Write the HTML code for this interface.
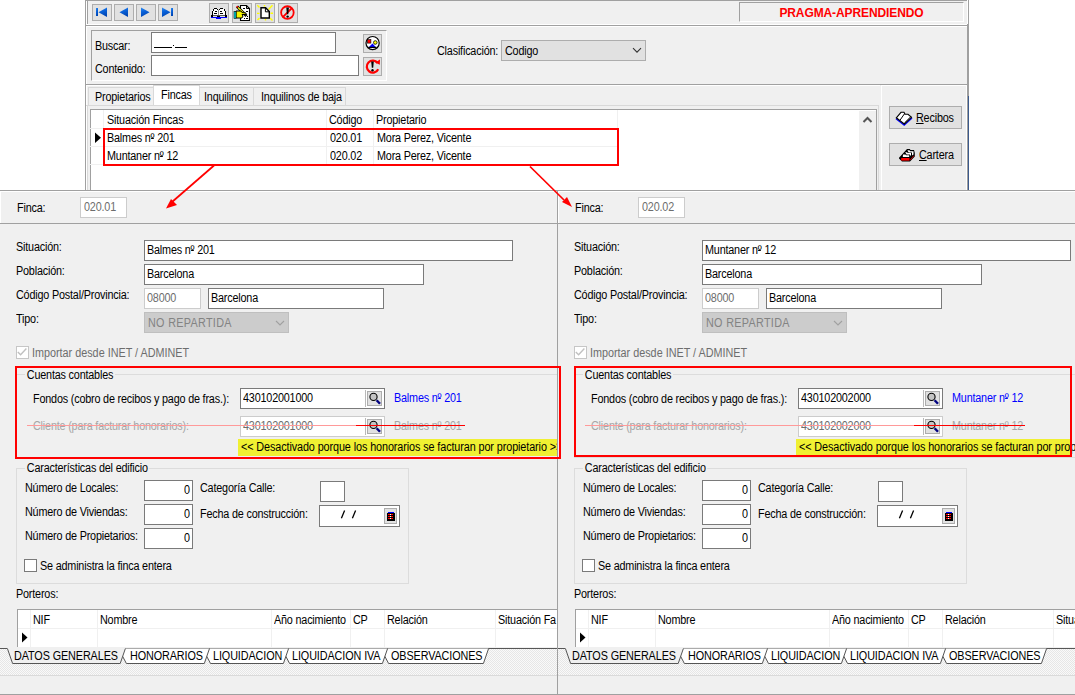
<!DOCTYPE html><html><head><meta charset='utf-8'><style>
*{margin:0;padding:0;box-sizing:border-box}
html,body{width:1075px;height:695px;overflow:hidden;background:#fff}
body{position:relative;font-family:"Liberation Sans",sans-serif;font-size:11px;color:#000}
.a{position:absolute}
.t{position:absolute;white-space:nowrap;line-height:13px;font-size:12px;letter-spacing:-0.2px;transform:scaleX(0.9);transform-origin:0 0}
.g{color:#6d6d6d}
.in{background:#fff;border:1px solid #7a7a7a}
.dis{background:#fff;border:1px solid #cccccc}
.btn{background:#e1e1e1;border:1px solid #adadad}
.sunk{border-top:1px solid #a0a0a0;border-left:1px solid #a0a0a0;border-right:1px solid #fff;border-bottom:1px solid #fff}
.clip{position:absolute;overflow:hidden}
</style></head><body>
<div class="a" style="left:85px;top:0px;width:884px;height:190px;background:#f0f0f0"></div>
<div class="a" style="left:85px;top:0px;width:1px;height:190px;background:#a0a0a0"></div>
<div class="a" style="left:86px;top:0px;width:1px;height:190px;background:#fff"></div>
<div class="a" style="left:85px;top:0px;width:882px;height:1px;background:#a0a0a0"></div>
<div class="a" style="left:967px;top:0px;width:2px;height:190px;background:#a0a0a0"></div>
<div class="a" style="left:967px;top:0px;width:1px;height:24px;background:#fff"></div>
<div class="a" style="left:968px;top:96px;width:1px;height:94px;background:#3c5a8c"></div>
<div class="a" style="left:966px;top:85px;width:1px;height:105px;background:#fff"></div>
<div class="a" style="left:87px;top:1px;width:1px;height:23px;background:#a0a0a0"></div>
<div class="a" style="left:87px;top:24px;width:880px;height:1px;background:#fff"></div>
<div class="a" style="left:85px;top:25px;width:883px;height:1px;background:#a0a0a0"></div>
<div class="a" style="left:86px;top:26px;width:881px;height:1px;background:#fff"></div>
<div class="a btn" style="left:92px;top:4px;width:20px;height:17px"></div>
<div class="a btn" style="left:114px;top:4px;width:20px;height:17px"></div>
<div class="a btn" style="left:136px;top:4px;width:20px;height:17px"></div>
<div class="a btn" style="left:158px;top:4px;width:20px;height:17px"></div>
<svg width="0" height="0" style="position:absolute"><defs><linearGradient id="bl" x1="0" y1="0" x2="0.3" y2="1"><stop offset="0" stop-color="#2f8cf0"/><stop offset="0.45" stop-color="#0a64dc"/><stop offset="1" stop-color="#0046b4"/></linearGradient></defs></svg><svg class="a" style="left:92px;top:4px" width="20" height="17"><rect x="4" y="4" width="2" height="8" fill="url(#bl)"/><path d="M6.5 8.2 L15 3.5 L15 13 Z" fill="url(#bl)"/></svg>
<svg class="a" style="left:114px;top:4px" width="20" height="17"><path d="M5.5 8.2 L14 3.5 L14 13 Z" fill="url(#bl)"/></svg>
<svg class="a" style="left:136px;top:4px" width="20" height="17"><path d="M5 3.5 L13.5 8.2 L5 13 Z" fill="url(#bl)"/></svg>
<svg class="a" style="left:158px;top:4px" width="20" height="17"><path d="M4 3.5 L12.5 8.2 L4 13 Z" fill="url(#bl)"/><rect x="13" y="4" width="2" height="8" fill="url(#bl)"/></svg>
<div class="a btn" style="left:209px;top:3px;width:20px;height:20px"></div>
<div class="a btn" style="left:232px;top:3px;width:20px;height:20px"></div>
<div class="a btn" style="left:255px;top:3px;width:20px;height:20px"></div>
<div class="a btn" style="left:278px;top:3px;width:20px;height:20px"></div>
<svg class="a" style="left:209px;top:3px" width="20" height="20" shape-rendering="crispEdges">
<path d="M4,6 L8,6 L9,7 L10,6 L15,6 L16,8 L16,12 L3,12 L3,8 Z" fill="#fff"/>
<rect x="5" y="5" width="3" height="1" fill="#000"/><rect x="11" y="5" width="3" height="1" fill="#000"/>
<rect x="4" y="6" width="1" height="2" fill="#000"/><rect x="15" y="6" width="1" height="2" fill="#000"/>
<rect x="3" y="8" width="1" height="4" fill="#000"/><rect x="16" y="8" width="1" height="4" fill="#000"/>
<rect x="2" y="12" width="2" height="2" fill="#000"/><rect x="16" y="12" width="2" height="2" fill="#000"/>
<rect x="8" y="6" width="1" height="1" fill="#000"/><rect x="10" y="6" width="1" height="1" fill="#000"/>
<rect x="9" y="7" width="1" height="6" fill="#8a8a8a"/>
<rect x="6" y="8" width="2" height="1" fill="#000"/><rect x="5" y="10" width="3" height="1" fill="#000"/>
<rect x="11" y="8" width="2" height="1" fill="#000"/><rect x="11" y="10" width="3" height="1" fill="#000"/>
<rect x="4" y="12" width="12" height="1" fill="#555"/><rect x="8" y="13" width="3" height="1" fill="#000"/>
<rect x="2" y="14" width="16" height="1" fill="#0000ff"/><rect x="7" y="15" width="5" height="1" fill="#0000ff"/>
</svg>
<svg class="a" style="left:232px;top:3px" width="20" height="20">
<path d="M8.5,2.5 L14.5,2.5 L17.5,5.5 L17.5,17.5 L8.5,17.5 Z" fill="#fff" stroke="#000" stroke-width="1.1"/>
<path d="M14.5,2.5 L14.5,5.5 L17.5,5.5" fill="none" stroke="#000" stroke-width="1"/>
<g shape-rendering="crispEdges" fill="#000"><rect x="11" y="5" width="2" height="1"/><rect x="14" y="8" width="2" height="1"/><rect x="15" y="13" width="1" height="1"/><rect x="12" y="15" width="1" height="1"/><rect x="14" y="15" width="2" height="1"/></g>
<path d="M5,3.5 L14.5,13" stroke="#000" stroke-width="2.8"/>
<path d="M6,4.5 L13.5,12" stroke="#ffff00" stroke-width="1.1"/>
<rect x="4.5" y="3" width="1.5" height="1.5" fill="#ff0000"/>
<path d="M4,8 L9,8 L10,9.5 L14,10 L14,11.5 L10,11.5 L11,13 L10,15 L4,15 Z" fill="#f4f400" stroke="#000" stroke-width="1"/>
<rect x="2" y="8.5" width="2" height="7" fill="#00e6f0" stroke="#000" stroke-width="0.6"/>
</svg>
<svg class="a" style="left:255px;top:3px" width="20" height="20">
<path d="M2.3,2.3 L4.5,4.5 M9.5,2 L9.5,3.5 M17.5,2.3 L13.5,6.5 M2,10.4 L4.5,10.4 M18,10.2 L15.5,10.2 M2.5,17 L4.5,15 M10.5,17.5 L10.5,16 M17.5,17.5 L15,15" stroke="#ffff00" stroke-width="1.4"/>
<path d="M6,4.8 L10.6,4.8 L14.3,8.6 L14.3,15 L6,15 Z" fill="#fff" stroke="#000" stroke-width="1.4"/>
<path d="M10.4,4.8 L10.4,8.8 L14.3,8.8" fill="none" stroke="#000" stroke-width="1"/>
</svg>
<svg class="a" style="left:278px;top:3px" width="20" height="20">
<circle cx="9.4" cy="9.55" r="6.3" fill="none" stroke="#ff0000" stroke-width="1.8"/>
<path d="M4.8,14.2 L14,5" stroke="#ff0000" stroke-width="1.8"/>
<path d="M8.3,4.4 L10.9,4.4 L10.3,11.3 L8.9,11.3 Z" fill="#000"/><circle cx="9.6" cy="13.6" r="1.2" fill="#000"/>
</svg>
<div class="a sunk" style="left:739px;top:2px;width:225px;height:20px"></div>
<div class="t" style="left:739px;width:225px;text-align:center;top:6px;font:bold 12px 'Liberation Sans',sans-serif;letter-spacing:-0.1px;color:#ff0000;line-height:14px;transform:none">PRAGMA-APRENDIENDO</div>
<div class="a sunk" style="left:91px;top:30px;width:296px;height:51px"></div>
<div class="t " style="left:95px;top:40px;">Buscar:</div>
<div class="a in" style="left:151px;top:32px;width:185px;height:21px"><div class="a" style="left:2px;top:14px;width:18px;height:1px;background:#000"></div><div class="a" style="left:21px;top:12px;width:1px;height:1px;background:#000"></div><div class="a" style="left:23px;top:14px;width:12px;height:1px;background:#000"></div></div>
<div class="t " style="left:95px;top:63px;">Contenido:</div>
<div class="a in" style="left:151px;top:55px;width:208px;height:21px"></div>
<div class="a btn" style="left:363px;top:34px;width:19px;height:19px"></div>
<div class="a btn" style="left:363px;top:57px;width:19px;height:19px"></div>
<svg class="a" style="left:363px;top:34px" width="19" height="19">
<circle cx="9.6" cy="9.1" r="6.6" fill="#fff" stroke="#000" stroke-width="1.2"/>
<rect x="4.4" y="5.6" width="3.5" height="3.5" fill="#f00" stroke="#000" stroke-width="0.6"/>
<circle cx="12.3" cy="8.5" r="1.8" fill="#ff0" stroke="#000" stroke-width="0.8"/>
<path d="M9.4,9.6 L12.8,13 L6,13Z" fill="#00f"/><path d="M5.2,13.4 L13.6,13.4" stroke="#000" stroke-width="1.2"/>
</svg>
<svg class="a" style="left:363px;top:57px" width="19" height="19">
<path d="M14.6,6 A6 6 0 1 0 15.2,12.2" fill="none" stroke="#f00" stroke-width="2.2"/>
<path d="M12.2,5.6 L17,2.6 L16.8,7.8Z" fill="#f00"/>
<path d="M8.2,4.5 L10.8,4.5 L10.2,10.8 L8.8,10.8Z" fill="#000"/><circle cx="9.5" cy="13.3" r="1.2" fill="#000"/>
</svg>
<div class="t " style="left:437px;top:45px;">Clasificación:</div>
<div class="a btn" style="left:501px;top:40px;width:145px;height:21px"></div>
<div class="t " style="left:505px;top:45px;">Codigo</div>
<svg class="a" style="left:631px;top:46px" width="12" height="10"><path d="M2 2.2 L6 6.2 L10 2.2" fill="none" stroke="#333" stroke-width="1.1"/></svg>
<div class="a" style="left:85px;top:84px;width:883px;height:1px;background:#a0a0a0"></div>
<div class="a" style="left:86px;top:85px;width:881px;height:1px;background:#fff"></div>
<div class="a" style="left:86px;top:105px;width:792px;height:1px;background:#d9d9d9"></div>
<div class="a"  style="left:88px;top:87px;width:66px;height:19px;background:#f0f0f0;border:1px solid #d9d9d9;border-bottom:none"></div>
<div class="t " style="left:95px;top:91px;">Propietarios</div>
<div class="a"  style="left:199px;top:87px;width:55px;height:19px;background:#f0f0f0;border:1px solid #d9d9d9;border-bottom:none"></div>
<div class="t " style="left:204px;top:91px;">Inquilinos</div>
<div class="a"  style="left:253px;top:87px;width:93px;height:19px;background:#f0f0f0;border:1px solid #d9d9d9;border-bottom:none"></div>
<div class="t " style="left:261px;top:91px;">Inquilinos de baja</div>
<div class="a " style="left:153px;top:85px;width:47px;height:22px;background:#fff;border:1px solid #d9d9d9;border-bottom:none"></div>
<div class="t " style="left:161px;top:89px;">Fincas</div>
<div class="a" style="left:87px;top:105px;width:792px;height:85px;background:#f0f0f0;border-left:1px solid #d9d9d9;border-right:1px solid #d9d9d9;border-top:1px solid #d9d9d9"></div>
<div class="a" style="left:90px;top:109px;width:787px;height:81px;background:#fff;border-left:1px solid #a0a0a0;border-right:1px solid #a0a0a0;border-top:1px solid #a0a0a0"></div>
<div class="a" style="left:859px;top:111px;width:17px;height:79px;background:#f0f0f0"></div>
<svg class="a" style="left:861px;top:114px" width="12" height="10" shape-rendering="crispEdges"><path d="M2.5 8 L6.5 4 L10.5 8" fill="none" stroke="#555" stroke-width="2" shape-rendering="auto"/></svg>
<div class="a" style="left:90px;top:128px;width:527px;height:1px;background:#f0f0f0"></div>
<div class="a" style="left:90px;top:146px;width:527px;height:1px;background:#f0f0f0"></div>
<div class="a" style="left:90px;top:164px;width:527px;height:1px;background:#f0f0f0"></div>
<div class="a" style="left:103px;top:110px;width:1px;height:54px;background:#f0f0f0"></div>
<div class="a" style="left:326px;top:110px;width:1px;height:54px;background:#f0f0f0"></div>
<div class="a" style="left:373px;top:110px;width:1px;height:54px;background:#f0f0f0"></div>
<div class="a" style="left:617px;top:110px;width:1px;height:54px;background:#f0f0f0"></div>
<div class="t " style="left:107px;top:114px;">Situación Fincas</div>
<div class="t " style="left:329px;top:114px;">Código</div>
<div class="t " style="left:376px;top:114px;">Propietario</div>
<div class="t " style="left:107px;top:132px;">Balmes n<span style="display:inline-block;position:relative">º<i style="position:absolute;left:0.5px;right:1px;top:6px;height:1px;background:currentColor"></i></span> 201</div>
<div class="t " style="left:330px;top:132px;">020.01</div>
<div class="t " style="left:377px;top:132px;">Mora Perez, Vicente</div>
<div class="t " style="left:107px;top:150px;">Muntaner n<span style="display:inline-block;position:relative">º<i style="position:absolute;left:0.5px;right:1px;top:6px;height:1px;background:currentColor"></i></span> 12</div>
<div class="t " style="left:330px;top:150px;">020.02</div>
<div class="t " style="left:377px;top:150px;">Mora Perez, Vicente</div>
<svg class="a" style="left:94px;top:132px" width="8" height="12"><path d="M1 0.5 L7 5.75 L1 11Z" fill="#000"/></svg>
<div class="a" style="left:880px;top:85px;width:1px;height:105px;background:#f0f0f0"></div>
<div class="a" style="left:881px;top:86px;width:1px;height:104px;background:#fff"></div>
<div class="a btn" style="left:889px;top:106px;width:73px;height:23px"></div>
<div class="a btn" style="left:889px;top:143px;width:73px;height:23px"></div>
<div class="t " style="left:916px;top:112px;"><u>R</u>ecibos</div>
<div class="t " style="left:919px;top:149px;"><u>C</u>artera</div>
<svg class="a" style="left:894px;top:108px" width="20" height="18">
<path d="M2,10.8 L10.2,17 L18,10" stroke="#0000ff" stroke-width="1.4" fill="none"/>
<path d="M2.3,9.8 L7,4.3 L10,4.3 L11,6.3 L14,6.3 L17.5,9.3 L10.3,16 Z" fill="#fff" stroke="#000" stroke-width="1.1"/>
<path d="M10.6,5.6 L6,12.2" stroke="#000" stroke-width="1"/>
<path d="M10.8,14.6 L16.6,8.8" stroke="#000" stroke-width="0.9"/>
</svg>
<svg class="a" style="left:897px;top:145px" width="20" height="18">
<path d="M2,12.8 L10,4 L12.8,4 L13.5,5 L17,5 L17.8,8 L17.8,11.5 L13,16.5 L5,16.5 L2,13.5 Z" fill="#000"/>
<path d="M6,9.5 L8.5,9.5 L9.2,10.3 L12.2,10.3 L12.2,12 L5.8,12 Z" fill="#fff"/>
<path d="M8.2,7.2 L10,7.2 L10.8,8 L14,8 L14,10.5 L13,10.5 L13,9.4 L9.6,9.4 Z" fill="#fff"/>
<path d="M10.4,5.2 L12.4,5.2 L13.2,6.2 L16.5,6.2 L16.5,9.6 L15,10.6 L15,7.4 L11.6,7.4 Z" fill="#fff"/>
<rect x="4.2" y="13" width="8.3" height="2.6" fill="#ff0000"/>
<path d="M13.3,15 L16.8,10.8" stroke="#c00000" stroke-width="1"/>
</svg>
<div class="a" style="left:103px;top:128px;width:516px;height:38px;border:2px solid #ff0000"></div>
<div class="clip" style="left:0px;top:190px;width:557px;height:505px;background:#f0f0f0">
<div class="a" style="left:0px;top:0px;width:557px;height:1px;background:#a0a0a0"></div>
<div class="a" style="left:0px;top:1px;width:1px;height:32px;background:#fff"></div>
<div class="a" style="left:0px;top:1px;width:557px;height:1px;background:#fff"></div>
<div class="t " style="left:17px;top:12px;">Finca:</div>
<div class="a dis" style="left:80px;top:7px;width:47px;height:21px"></div>
<div class="t g" style="left:84px;top:11px;">020.01</div>
<div class="a" style="left:0px;top:33px;width:557px;height:1px;background:#a0a0a0"></div>
<div class="t " style="left:16px;top:51px;">Situación:</div>
<div class="a in" style="left:144px;top:50px;width:369px;height:21px"></div>
<div class="t " style="left:147px;top:54px;">Balmes n<span style="display:inline-block;position:relative">º<i style="position:absolute;left:0.5px;right:1px;top:6px;height:1px;background:currentColor"></i></span> 201</div>
<div class="t " style="left:16px;top:75px;">Población:</div>
<div class="a in" style="left:144px;top:74px;width:280px;height:21px"></div>
<div class="t " style="left:147px;top:78px;">Barcelona</div>
<div class="t " style="left:16px;top:99px;">Código Postal/Provincia:</div>
<div class="a dis" style="left:144px;top:98px;width:57px;height:21px"></div>
<div class="t g" style="left:147px;top:102px;">08000</div>
<div class="a in" style="left:208px;top:98px;width:176px;height:21px"></div>
<div class="t " style="left:211px;top:102px;">Barcelona</div>
<div class="t " style="left:16px;top:123px;">Tipo:</div>
<div class="a " style="left:144px;top:122px;width:145px;height:21px;background:#cccccc;border:1px solid #bfbfbf"></div>
<div class="t " style="left:148px;top:127px;color:#838383;letter-spacing:0.35px">NO REPARTIDA</div>
<svg class="a" style="left:274px;top:128px" width="12" height="10"><path d="M2 3 L6 7 L10 3" fill="none" stroke="#a0a0a0" stroke-width="1.1"/></svg>
<div class="a " style="left:16px;top:156px;width:13px;height:13px;border:1px solid #c6c6c6;background:#fff"></div>
<svg class="a" style="left:16px;top:156px" width="13" height="13"><path d="M1.8,6 L4.6,8.8 L10.4,2.6" fill="none" stroke="#c0c0c0" stroke-width="1.4"/></svg>
<div class="t " style="left:32px;top:157px;color:#6d6d6d;letter-spacing:0px">Importar desde INET / ADMINET</div>
<div class="a " style="left:16px;top:184px;width:542px;height:84px;border:1px solid #dcdcdc"></div>
<div class="t" style="left:25px;top:179px;background:#f0f0f0;padding:0 2px">Cuentas contables</div>
<div class="t " style="left:33px;top:203px;">Fondos (cobro de recibos y pago de fras.):</div>
<div class="a in" style="left:240px;top:198px;width:145px;height:21px"></div>
<div class="t " style="left:243px;top:202px;">430102001000</div>
<div class="a btn" style="left:367px;top:201px;width:15px;height:15px"></div>
<div class="a" style="left:365px;top:200px;width:1px;height:17px;background:#b9b9b9"></div>
<svg class="a" style="left:367px;top:201px" width="16" height="16"><circle cx="6.5" cy="5.9" r="3.6" fill="#c4c4c4" stroke="#000" stroke-width="1.1"/><path d="M9.6,9.2 L13,12.8" stroke="#000080" stroke-width="2.4"/></svg>
<div class="t " style="left:394px;top:202px;color:#0000ff">Balmes n<span style="display:inline-block;position:relative">º<i style="position:absolute;left:0.5px;right:1px;top:6px;height:1px;background:currentColor"></i></span> 201</div>
<div class="t " style="left:33px;top:230px;color:#a6a6a6">Cliente (para facturar honorarios):</div>
<div class="a dis" style="left:240px;top:226px;width:145px;height:21px"></div>
<div class="t g" style="left:243px;top:230px;">430102001000</div>
<div class="a btn" style="left:367px;top:229px;width:15px;height:15px"></div>
<div class="a" style="left:365px;top:228px;width:1px;height:17px;background:#b9b9b9"></div>
<svg class="a" style="left:367px;top:229px" width="16" height="16"><circle cx="6.5" cy="5.9" r="3.6" fill="#c4c4c4" stroke="#000" stroke-width="1.1"/><path d="M9.6,9.2 L13,12.8" stroke="#000080" stroke-width="2.4"/></svg>
<div class="t " style="left:394px;top:230px;color:#a6a6a6">Balmes n<span style="display:inline-block;position:relative">º<i style="position:absolute;left:0.5px;right:1px;top:6px;height:1px;background:currentColor"></i></span> 201</div>
<div class="a" style="left:27px;top:235px;width:329px;height:1px;background:#ff9a9a"></div>
<div class="a" style="left:356px;top:235px;width:109px;height:1px;background:#ff0000"></div>
<div class="a" style="left:238px;top:249px;width:330px;height:17px;background:#f0f032"></div>
<div class="t " style="left:241px;top:251px;letter-spacing:-0.1px">&lt;&lt; Desactivado porque los honorarios se facturan por propietario &gt;&gt;</div>
<div class="a " style="left:16px;top:278px;width:393px;height:116px;border:1px solid #dcdcdc"></div>
<div class="t" style="left:25px;top:272px;background:#f0f0f0;padding:0 2px">Características del edificio</div>
<div class="t " style="left:25px;top:292px;">Número de Locales:</div>
<div class="a in" style="left:144px;top:290px;width:49px;height:21px"></div>
<div class="t " style="left:184px;top:294px;">0</div>
<div class="t " style="left:25px;top:316px;">Número de Viviendas:</div>
<div class="a in" style="left:144px;top:314px;width:49px;height:21px"></div>
<div class="t " style="left:184px;top:318px;">0</div>
<div class="t " style="left:25px;top:340px;">Número de Propietarios:</div>
<div class="a in" style="left:144px;top:338px;width:49px;height:21px"></div>
<div class="t " style="left:184px;top:342px;">0</div>
<div class="t " style="left:200px;top:292px;">Categoría Calle:</div>
<div class="a in" style="left:320px;top:291px;width:25px;height:21px"></div>
<div class="t " style="left:200px;top:318px;">Fecha de construcción:</div>
<div class="a in" style="left:319px;top:315px;width:81px;height:22px"></div>
<svg class="a" style="left:340px;top:319px" width="18" height="11"><path d="M4.6,1.5 L1.4,9.3 M15.6,1.5 L12.4,9.3" stroke="#000" stroke-width="1.3"/></svg>
<div class="a btn" style="left:384px;top:318px;width:13px;height:16px"></div>
<svg class="a" style="left:384px;top:318px" width="13" height="16" shape-rendering="crispEdges"><rect x="3" y="5" width="8" height="8" rx="1" fill="#000"/><rect x="4" y="4" width="6" height="1" fill="#0000ff"/><g fill="#ff0000"><rect x="4" y="6" width="2" height="1"/><rect x="7" y="6" width="2" height="1"/><rect x="4" y="8" width="2" height="1"/><rect x="7" y="8" width="2" height="1"/><rect x="4" y="10" width="2" height="1"/><rect x="7" y="10" width="2" height="1"/></g><g fill="#fff"><rect x="6" y="6" width="1" height="1"/><rect x="6" y="8" width="1" height="1"/><rect x="6" y="10" width="1" height="1"/></g></svg>
<div class="a in" style="left:24px;top:369px;width:13px;height:13px"></div>
<div class="t " style="left:40px;top:370px;">Se administra la finca entera</div>
<div class="t " style="left:16px;top:398px;">Porteros:</div>
<div class="a" style="left:17px;top:419px;width:540px;height:38px;background:#fff;border-top:1px solid #a0a0a0;border-left:1px solid #a0a0a0"></div>
<div class="a" style="left:18px;top:438px;width:539px;height:1px;background:#f0f0f0"></div>
<div class="a" style="left:30px;top:420px;width:1px;height:37px;background:#f0f0f0"></div>
<div class="a" style="left:97px;top:420px;width:1px;height:37px;background:#f0f0f0"></div>
<div class="a" style="left:271px;top:420px;width:1px;height:37px;background:#f0f0f0"></div>
<div class="a" style="left:350px;top:420px;width:1px;height:37px;background:#f0f0f0"></div>
<div class="a" style="left:384px;top:420px;width:1px;height:37px;background:#f0f0f0"></div>
<div class="a" style="left:495px;top:420px;width:1px;height:37px;background:#f0f0f0"></div>
<div class="t " style="left:33px;top:424px;">NIF</div>
<div class="t " style="left:100px;top:424px;">Nombre</div>
<div class="t " style="left:274px;top:424px;">Año nacimiento</div>
<div class="t " style="left:353px;top:424px;">CP</div>
<div class="t " style="left:387px;top:424px;">Relación</div>
<div class="t " style="left:498px;top:424px;">Situación Fa</div>
<svg class="a" style="left:21px;top:442px" width="8" height="12"><path d="M1 0.5 L6.5 5.5 L1 10.5Z" fill="#000"/></svg>
<div class="a" style="left:0px;top:458px;width:557px;height:27px;background:repeating-conic-gradient(#f9f9f9 0% 25%, #e6e6e6 0% 50%) 0 0/2px 2px"></div>
<div class="a" style="left:0px;top:485px;width:557px;height:1px;background:#dadada"></div>
<div class="a" style="left:0px;top:504px;width:557px;height:1px;background:#a0a0a0"></div>
<svg class="a" style="left:0;top:457px" width="557" height="18"><path d="M0,1.5 L7.4,1.5 M125.4,1.5 L557,1.5" stroke="#575757" stroke-width="1"/><path d="M387.6,1.5 L488.6,1.5 L483.40000000000003,16.5 L388.6,16.5 L384.76000000000005,9.2 Z" fill="#fff"/><path d="M384.76000000000005,9.2 L388.6,16.5 L483.40000000000003,16.5 L488.6,1.5" fill="none" stroke="#555" stroke-width="1"/><path d="M288.6,1.5 L387.6,1.5 L382.40000000000003,16.5 L289.6,16.5 L285.76000000000005,9.2 Z" fill="#fff"/><path d="M285.76000000000005,9.2 L289.6,16.5 L382.40000000000003,16.5 L387.6,1.5" fill="none" stroke="#555" stroke-width="1"/><path d="M209.5,1.5 L288.6,1.5 L283.40000000000003,16.5 L210.5,16.5 L206.66,9.2 Z" fill="#fff"/><path d="M206.66,9.2 L210.5,16.5 L283.40000000000003,16.5 L288.6,1.5" fill="none" stroke="#555" stroke-width="1"/><path d="M125.4,1.5 L209.5,1.5 L204.3,16.5 L126.4,16.5 L122.56,9.2 Z" fill="#fff"/><path d="M122.56,9.2 L126.4,16.5 L204.3,16.5 L209.5,1.5" fill="none" stroke="#555" stroke-width="1"/><path d="M7.4,1 L125.4,1 L120.2,16.5 L12.6,16.5 Z" fill="#f0f0f0"/><path d="M7.4,1.5 L12.6,16.5 L120.2,16.5 L125.4,1.5" fill="none" stroke="#555" stroke-width="1"/></svg>
<div class="t " style="left:14px;top:460px;letter-spacing:-0.1px">DATOS GENERALES</div>
<div class="t " style="left:130px;top:460px;letter-spacing:-0.1px">HONORARIOS</div>
<div class="t " style="left:213px;top:460px;letter-spacing:-0.1px">LIQUIDACION</div>
<div class="t " style="left:292px;top:460px;letter-spacing:-0.1px">LIQUIDACION IVA</div>
<div class="t " style="left:391px;top:460px;letter-spacing:-0.1px">OBSERVACIONES</div>
</div>
<div class="a" style="left:557px;top:190px;width:1px;height:505px;background:#a0a0a0"></div>
<div class="clip" style="left:558px;top:190px;width:517px;height:505px;background:#f0f0f0">
<div class="a" style="left:0px;top:0px;width:517px;height:1px;background:#a0a0a0"></div>
<div class="a" style="left:0px;top:1px;width:1px;height:32px;background:#fff"></div>
<div class="a" style="left:0px;top:1px;width:517px;height:1px;background:#fff"></div>
<div class="t " style="left:17px;top:12px;">Finca:</div>
<div class="a dis" style="left:80px;top:7px;width:47px;height:21px"></div>
<div class="t g" style="left:84px;top:11px;">020.02</div>
<div class="a" style="left:0px;top:33px;width:517px;height:1px;background:#a0a0a0"></div>
<div class="t " style="left:16px;top:51px;">Situación:</div>
<div class="a in" style="left:144px;top:50px;width:369px;height:21px"></div>
<div class="t " style="left:147px;top:54px;">Muntaner n<span style="display:inline-block;position:relative">º<i style="position:absolute;left:0.5px;right:1px;top:6px;height:1px;background:currentColor"></i></span> 12</div>
<div class="t " style="left:16px;top:75px;">Población:</div>
<div class="a in" style="left:144px;top:74px;width:280px;height:21px"></div>
<div class="t " style="left:147px;top:78px;">Barcelona</div>
<div class="t " style="left:16px;top:99px;">Código Postal/Provincia:</div>
<div class="a dis" style="left:144px;top:98px;width:57px;height:21px"></div>
<div class="t g" style="left:147px;top:102px;">08000</div>
<div class="a in" style="left:208px;top:98px;width:176px;height:21px"></div>
<div class="t " style="left:211px;top:102px;">Barcelona</div>
<div class="t " style="left:16px;top:123px;">Tipo:</div>
<div class="a " style="left:144px;top:122px;width:145px;height:21px;background:#cccccc;border:1px solid #bfbfbf"></div>
<div class="t " style="left:148px;top:127px;color:#838383;letter-spacing:0.35px">NO REPARTIDA</div>
<svg class="a" style="left:274px;top:128px" width="12" height="10"><path d="M2 3 L6 7 L10 3" fill="none" stroke="#a0a0a0" stroke-width="1.1"/></svg>
<div class="a " style="left:16px;top:156px;width:13px;height:13px;border:1px solid #c6c6c6;background:#fff"></div>
<svg class="a" style="left:16px;top:156px" width="13" height="13"><path d="M1.8,6 L4.6,8.8 L10.4,2.6" fill="none" stroke="#c0c0c0" stroke-width="1.4"/></svg>
<div class="t " style="left:32px;top:157px;color:#6d6d6d;letter-spacing:0px">Importar desde INET / ADMINET</div>
<div class="a " style="left:16px;top:184px;width:542px;height:84px;border:1px solid #dcdcdc"></div>
<div class="t" style="left:25px;top:179px;background:#f0f0f0;padding:0 2px">Cuentas contables</div>
<div class="t " style="left:33px;top:203px;">Fondos (cobro de recibos y pago de fras.):</div>
<div class="a in" style="left:240px;top:198px;width:145px;height:21px"></div>
<div class="t " style="left:243px;top:202px;">430102002000</div>
<div class="a btn" style="left:367px;top:201px;width:15px;height:15px"></div>
<div class="a" style="left:365px;top:200px;width:1px;height:17px;background:#b9b9b9"></div>
<svg class="a" style="left:367px;top:201px" width="16" height="16"><circle cx="6.5" cy="5.9" r="3.6" fill="#c4c4c4" stroke="#000" stroke-width="1.1"/><path d="M9.6,9.2 L13,12.8" stroke="#000080" stroke-width="2.4"/></svg>
<div class="t " style="left:394px;top:202px;color:#0000ff">Muntaner n<span style="display:inline-block;position:relative">º<i style="position:absolute;left:0.5px;right:1px;top:6px;height:1px;background:currentColor"></i></span> 12</div>
<div class="t " style="left:33px;top:230px;color:#a6a6a6">Cliente (para facturar honorarios):</div>
<div class="a dis" style="left:240px;top:226px;width:145px;height:21px"></div>
<div class="t g" style="left:243px;top:230px;">430102002000</div>
<div class="a btn" style="left:367px;top:229px;width:15px;height:15px"></div>
<div class="a" style="left:365px;top:228px;width:1px;height:17px;background:#b9b9b9"></div>
<svg class="a" style="left:367px;top:229px" width="16" height="16"><circle cx="6.5" cy="5.9" r="3.6" fill="#c4c4c4" stroke="#000" stroke-width="1.1"/><path d="M9.6,9.2 L13,12.8" stroke="#000080" stroke-width="2.4"/></svg>
<div class="t " style="left:394px;top:230px;color:#a6a6a6">Muntaner n<span style="display:inline-block;position:relative">º<i style="position:absolute;left:0.5px;right:1px;top:6px;height:1px;background:currentColor"></i></span> 12</div>
<div class="a" style="left:27px;top:235px;width:329px;height:1px;background:#ff9a9a"></div>
<div class="a" style="left:356px;top:235px;width:111px;height:1px;background:#ff0000"></div>
<div class="a" style="left:238px;top:249px;width:274px;height:17px;background:#f0f032"></div>
<div class="t " style="left:241px;top:251px;letter-spacing:-0.1px">&lt;&lt; Desactivado porque los honorarios se facturan por propietario &gt;&gt;</div>
<div class="a " style="left:16px;top:278px;width:393px;height:116px;border:1px solid #dcdcdc"></div>
<div class="t" style="left:25px;top:272px;background:#f0f0f0;padding:0 2px">Características del edificio</div>
<div class="t " style="left:25px;top:292px;">Número de Locales:</div>
<div class="a in" style="left:144px;top:290px;width:49px;height:21px"></div>
<div class="t " style="left:184px;top:294px;">0</div>
<div class="t " style="left:25px;top:316px;">Número de Viviendas:</div>
<div class="a in" style="left:144px;top:314px;width:49px;height:21px"></div>
<div class="t " style="left:184px;top:318px;">0</div>
<div class="t " style="left:25px;top:340px;">Número de Propietarios:</div>
<div class="a in" style="left:144px;top:338px;width:49px;height:21px"></div>
<div class="t " style="left:184px;top:342px;">0</div>
<div class="t " style="left:200px;top:292px;">Categoría Calle:</div>
<div class="a in" style="left:320px;top:291px;width:25px;height:21px"></div>
<div class="t " style="left:200px;top:318px;">Fecha de construcción:</div>
<div class="a in" style="left:319px;top:315px;width:81px;height:22px"></div>
<svg class="a" style="left:340px;top:319px" width="18" height="11"><path d="M4.6,1.5 L1.4,9.3 M15.6,1.5 L12.4,9.3" stroke="#000" stroke-width="1.3"/></svg>
<div class="a btn" style="left:384px;top:318px;width:13px;height:16px"></div>
<svg class="a" style="left:384px;top:318px" width="13" height="16" shape-rendering="crispEdges"><rect x="3" y="5" width="8" height="8" rx="1" fill="#000"/><rect x="4" y="4" width="6" height="1" fill="#0000ff"/><g fill="#ff0000"><rect x="4" y="6" width="2" height="1"/><rect x="7" y="6" width="2" height="1"/><rect x="4" y="8" width="2" height="1"/><rect x="7" y="8" width="2" height="1"/><rect x="4" y="10" width="2" height="1"/><rect x="7" y="10" width="2" height="1"/></g><g fill="#fff"><rect x="6" y="6" width="1" height="1"/><rect x="6" y="8" width="1" height="1"/><rect x="6" y="10" width="1" height="1"/></g></svg>
<div class="a in" style="left:24px;top:369px;width:13px;height:13px"></div>
<div class="t " style="left:40px;top:370px;">Se administra la finca entera</div>
<div class="t " style="left:16px;top:398px;">Porteros:</div>
<div class="a" style="left:17px;top:419px;width:500px;height:38px;background:#fff;border-top:1px solid #a0a0a0;border-left:1px solid #a0a0a0"></div>
<div class="a" style="left:18px;top:438px;width:499px;height:1px;background:#f0f0f0"></div>
<div class="a" style="left:30px;top:420px;width:1px;height:37px;background:#f0f0f0"></div>
<div class="a" style="left:97px;top:420px;width:1px;height:37px;background:#f0f0f0"></div>
<div class="a" style="left:271px;top:420px;width:1px;height:37px;background:#f0f0f0"></div>
<div class="a" style="left:350px;top:420px;width:1px;height:37px;background:#f0f0f0"></div>
<div class="a" style="left:384px;top:420px;width:1px;height:37px;background:#f0f0f0"></div>
<div class="a" style="left:495px;top:420px;width:1px;height:37px;background:#f0f0f0"></div>
<div class="t " style="left:33px;top:424px;">NIF</div>
<div class="t " style="left:100px;top:424px;">Nombre</div>
<div class="t " style="left:274px;top:424px;">Año nacimiento</div>
<div class="t " style="left:353px;top:424px;">CP</div>
<div class="t " style="left:387px;top:424px;">Relación</div>
<div class="t " style="left:498px;top:424px;">Situación Fa</div>
<svg class="a" style="left:21px;top:442px" width="8" height="12"><path d="M1 0.5 L6.5 5.5 L1 10.5Z" fill="#000"/></svg>
<div class="a" style="left:0px;top:458px;width:517px;height:27px;background:repeating-conic-gradient(#f9f9f9 0% 25%, #e6e6e6 0% 50%) 0 0/2px 2px"></div>
<div class="a" style="left:0px;top:485px;width:517px;height:1px;background:#dadada"></div>
<div class="a" style="left:0px;top:504px;width:517px;height:1px;background:#a0a0a0"></div>
<svg class="a" style="left:0;top:457px" width="517" height="18"><path d="M0,1.5 L7.4,1.5 M125.4,1.5 L517,1.5" stroke="#575757" stroke-width="1"/><path d="M387.6,1.5 L488.6,1.5 L483.40000000000003,16.5 L388.6,16.5 L384.76000000000005,9.2 Z" fill="#fff"/><path d="M384.76000000000005,9.2 L388.6,16.5 L483.40000000000003,16.5 L488.6,1.5" fill="none" stroke="#555" stroke-width="1"/><path d="M288.6,1.5 L387.6,1.5 L382.40000000000003,16.5 L289.6,16.5 L285.76000000000005,9.2 Z" fill="#fff"/><path d="M285.76000000000005,9.2 L289.6,16.5 L382.40000000000003,16.5 L387.6,1.5" fill="none" stroke="#555" stroke-width="1"/><path d="M209.5,1.5 L288.6,1.5 L283.40000000000003,16.5 L210.5,16.5 L206.66,9.2 Z" fill="#fff"/><path d="M206.66,9.2 L210.5,16.5 L283.40000000000003,16.5 L288.6,1.5" fill="none" stroke="#555" stroke-width="1"/><path d="M125.4,1.5 L209.5,1.5 L204.3,16.5 L126.4,16.5 L122.56,9.2 Z" fill="#fff"/><path d="M122.56,9.2 L126.4,16.5 L204.3,16.5 L209.5,1.5" fill="none" stroke="#555" stroke-width="1"/><path d="M7.4,1 L125.4,1 L120.2,16.5 L12.6,16.5 Z" fill="#f0f0f0"/><path d="M7.4,1.5 L12.6,16.5 L120.2,16.5 L125.4,1.5" fill="none" stroke="#555" stroke-width="1"/></svg>
<div class="t " style="left:14px;top:460px;letter-spacing:-0.1px">DATOS GENERALES</div>
<div class="t " style="left:130px;top:460px;letter-spacing:-0.1px">HONORARIOS</div>
<div class="t " style="left:213px;top:460px;letter-spacing:-0.1px">LIQUIDACION</div>
<div class="t " style="left:292px;top:460px;letter-spacing:-0.1px">LIQUIDACION IVA</div>
<div class="t " style="left:391px;top:460px;letter-spacing:-0.1px">OBSERVACIONES</div>
</div>
<div class="a" style="left:15px;top:366px;width:546px;height:93px;border:2px solid #ff0000"></div>
<div class="a" style="left:574px;top:366px;width:498px;height:91px;border:2px solid #ff0000"></div>
<svg class="a" style="left:0;top:0" width="1075" height="695">
<path d="M214 165.5 L172 202" stroke="#ff0000" stroke-width="1.7"/>
<path d="M166 208.5 L171 199 L177 205 Z" fill="#ff0000"/>
<path d="M530 166.5 L564 200" stroke="#ff0000" stroke-width="1.7"/>
<path d="M572 207 L562 202 L567 197 Z" fill="#ff0000"/>
</svg>
</body></html>
